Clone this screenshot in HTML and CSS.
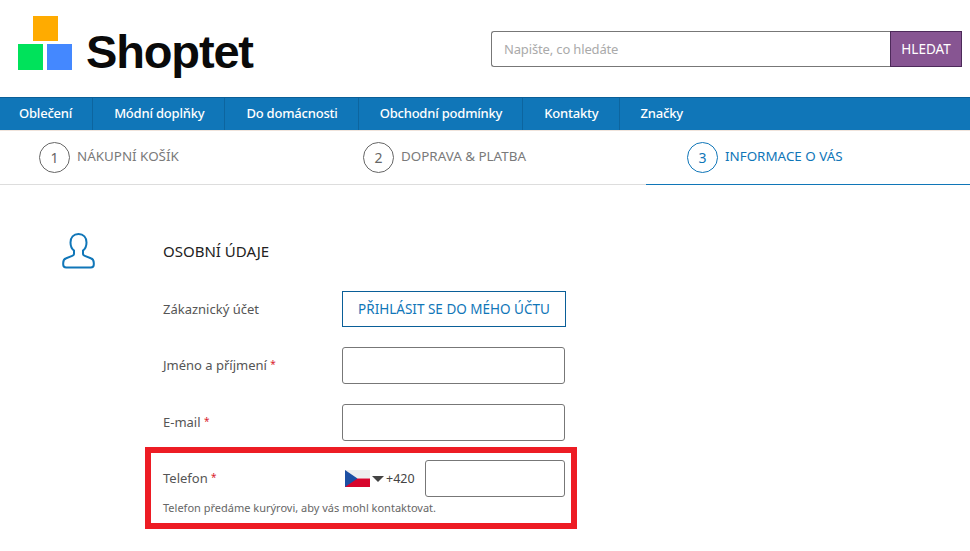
FILE: index.html
```html
<!DOCTYPE html>
<html>
<head>
  <title>Shoptet</title>
  <link rel="stylesheet" href="styles.css">
</head>
<body>

  <header class="top">
    <div class="logo">
      <div class="logo-mark">
        <span class="sq sq-orange"></span>
        <span class="sq sq-green"></span>
        <span class="sq sq-blue"></span>
      </div>
      <div class="logo-text">Shoptet</div>
    </div>
    <div class="search">
      <div class="search-input">Napište, co hledáte</div>
      <div class="search-btn">HLEDAT</div>
    </div>
  </header>

  <nav class="menu">
    <a>Oblečení</a>
    <a>Módní doplňky</a>
    <a>Do domácnosti</a>
    <a>Obchodní podmínky</a>
    <a>Kontakty</a>
    <a class="last">Značky</a>
  </nav>

  <div class="steps">
    <div class="step"><span class="num">1</span>NÁKUPNÍ KOŠÍK</div>
    <div class="step"><span class="num">2</span>DOPRAVA &amp; PLATBA</div>
    <div class="step active"><span class="num">3</span>INFORMACE O VÁS</div>
  </div>

  <main class="content">
    <div class="person">
      <svg width="33" height="38" viewBox="0 0 33 38" fill="none" stroke="#1076b8" stroke-width="2">
        <path d="M16.5 2c-5 0-8 3.600-8 8.500 0 3.500 1.500 6.500 3.500 8v3.200c0 1-.7 1.800-1.800 2.200l-6 2.300C2.200 26.900 1.200 28.500 1.200 31v1.500c0 1.800 1.300 3 3 3h24.600c1.700 0 3-1.200 3-3V31c0-2.500-1-4.100-3-4.800l-6-2.300c-1.100-.4-1.800-1.200-1.800-2.200v-3.200c2-1.500 3.500-4.500 3.500-8C24.500 5.600 21.500 2 16.500 2z"/>
      </svg>
    </div>
    <div class="form">
      <h3>OSOBNÍ ÚDAJE</h3>
      <div class="row row-account">
        <label>Zákaznický účet</label>
        <div class="login-btn">PŘIHLÁSIT SE DO MÉHO ÚČTU</div>
      </div>
      <div class="row row-name">
        <label class="req">Jméno a příjmení <em>*</em></label>
        <div class="field"></div>
      </div>
      <div class="row row-mail">
        <label class="req">E-mail <em>*</em></label>
        <div class="field"></div>
      </div>
      <div class="phone-box">
        <div class="row">
          <label class="req">Telefon <em>*</em></label>
          <div class="phone">
            <svg class="flag" width="25" height="17" viewBox="0 0 25 17">
              <rect width="25" height="8.500" fill="#eeeeee"/>
              <rect y="8.500" width="25" height="8.500" fill="#d7052c"/>
              <path d="M0 0l12.500 8.500L0 17z" fill="#1c4fa3"/>
            </svg>
            <span class="arrow"></span>
            <span class="prefix">+420</span>
            <div class="field field-phone"></div>
          </div>
        </div>
        <p class="hint">Telefon předáme kurýrovi, aby vás mohl kontaktovat.</p>
      </div>
    </div>
  </main>

</body>
</html>
```

FILE: styles.css
```css
body {
  font-family: "Noto Sans", sans-serif;
  margin: 0;
  background-color: #fff;
  color: #444;
  overflow: hidden;
}

/* Header */
.top {
  display: flex;
  justify-content: space-between;
  height: 97px;
  padding: 16px 8px 0 18px;
  box-sizing: border-box;
}

.logo {
  display: flex;
  align-items: flex-start;
  gap: 14px;
}

.logo-mark {
  display: grid;
  grid-template-columns: 25px 25px;
  grid-template-rows: 25px 26px;
  column-gap: 4px;
  row-gap: 3px;
}

.sq {
  display: block;
}

.sq-orange {
  grid-column: 1 / 3;
  justify-self: center;
  width: 25px;
  background-color: #ffab00;
}

.sq-green {
  background-color: #00e25b;
}

.sq-blue {
  background-color: #4488ff;
}

.logo-text {
  font-family: "Liberation Sans", sans-serif;
  font-weight: bold;
  font-size: 47px;
  line-height: 48px;
  letter-spacing: -1.15px;
  color: #0a0a0a;
  margin-top: 12px;
}

.search {
  display: flex;
  width: 471px;
  height: 36px;
  margin-top: 15px;
}

.search-input {
  flex: 1;
  border: 1px solid #777;
  border-right: 0;
  border-radius: 3px 0 0 3px;
  padding-left: 12px;
  font-size: 13px;
  letter-spacing: -0.15px;
  line-height: 34px;
  color: #aaa;
}

.search-btn {
  width: 70px;
  background-color: #875592;
  border: 1px solid #4d2a5a;
  color: #fff;
  font-size: 13.5px;
  line-height: 34px;
  text-align: center;
}

/* Main menu */
.menu {
  display: flex;
  height: 33px;
  background-color: #1076b8;
  border-top: 1px solid #0a5f98;
  box-sizing: border-box;
}

.menu a {
  padding: 0 20px 0 21px;
  border-right: 1px solid #0d659f;
  color: #fff;
  font-size: 13px;
  font-weight: 500;
  letter-spacing: -0.2px;
  line-height: 31px;
}

.menu a:first-child {
  padding-left: 19px;
}

.menu a.last {
  border-right: 0;
}

/* Steps */
.steps {
  display: grid;
  grid-template-columns: 323px 323px 324px;
  height: 55px;
  border-top: 1px solid #f0e4dc;
  box-sizing: border-box;
}

.step {
  display: flex;
  align-items: flex-start;
  padding: 11px 0 0 40px;
  border-bottom: 1px solid #ddd;
  font-size: 13.4px;
  line-height: 28px;
  color: #7a7a7a;
}

.step:first-child {
  padding-left: 39px;
}

.step .num {
  width: 29px;
  height: 29px;
  margin-right: 7px;
  border: 1px solid #666;
  border-radius: 50%;
  text-align: center;
  line-height: 29px;
  font-size: 14px;
  color: #666;
}

.step.active {
  padding-left: 41px;
  border-bottom: 1px solid #1076b8;
  color: #1076b8;
}

.step.active .num {
  border-color: #1076b8;
  color: #1076b8;
}

/* Form */
.content {
  display: flex;
  padding: 47px 0 0 62px;
}

.person {
  width: 101px;
}

.form {
  width: 403px;
}

h3 {
  margin: 9px 0 0;
  font-size: 15px;
  font-weight: 400;
  line-height: 20px;
  color: #222;
}

.row {
  display: flex;
  align-items: center;
}

.row label {
  width: 179px;
  font-size: 13px;
  color: #555;
}

.row label.req {
  padding-bottom: 2px;
}

.row em {
  font-style: normal;
  font-size: 10px;
  vertical-align: 2px;
  color: #d9232e;
}

.row-account {
  margin-top: 30px;
}

.row-name {
  margin-top: 20px;
}

.row-mail {
  margin-top: 20px;
}

.login-btn {
  width: 222px;
  height: 34px;
  border: 1px solid #0a5f98;
  color: #1076b8;
  font-size: 13.5px;
  line-height: 34px;
  text-align: center;
}

.field {
  width: 221px;
  height: 35px;
  border: 1px solid #777;
  border-radius: 3px;
}

.phone-box {
  width: 432px;
  height: 82px;
  margin: 6px 0 0 -18px;
  padding: 7px 0 0 12px;
  border: 6px solid #ed1c24;
  box-sizing: border-box;
}

.phone {
  display: flex;
  align-items: center;
}

.flag {
  margin: 0 2px 0 3px;
}

.arrow {
  width: 0;
  height: 0;
  border-left: 6px solid transparent;
  border-right: 6px solid transparent;
  border-top: 6px solid #444;
  margin-right: 2px;
}

.prefix {
  font-size: 12.5px;
  width: 39px;
}

.field-phone {
  width: 138px;
}

.hint {
  margin: 3px 0 0;
  font-size: 11px;
  line-height: 16px;
  color: #666;
}
```
